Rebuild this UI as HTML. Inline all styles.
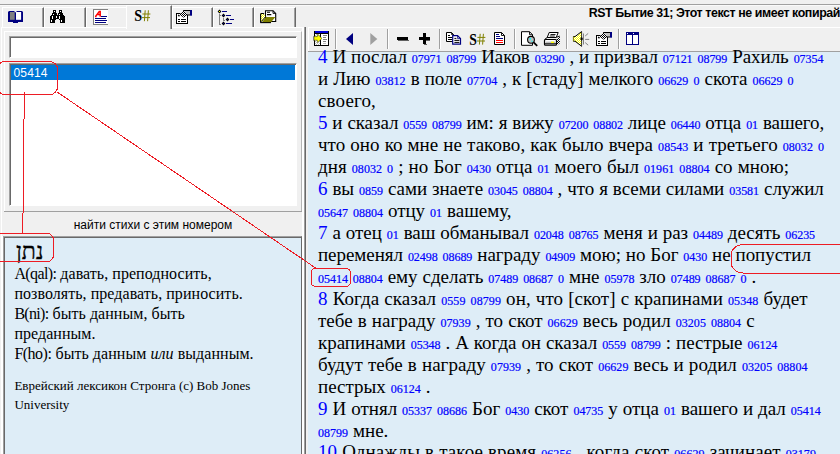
<!DOCTYPE html>
<html><head><meta charset="utf-8">
<style>
html,body{margin:0;padding:0;}
body{width:840px;height:454px;overflow:hidden;background:#f0f0f0;position:relative;font-family:"Liberation Sans",sans-serif;}
.abs{position:absolute;}
#topline{left:0;top:4px;width:840px;height:1px;background:#a0a0a0;}
#topline2{left:0;top:5px;width:840px;height:1px;background:#fafafa;}
#title{left:588.7px;top:5.8px;font-weight:bold;font-size:12.4px;white-space:nowrap;color:#000;letter-spacing:-0.42px;}
.tab{top:7px;height:20px;width:41px;border-right:1px solid #696969;box-shadow:inset -1px 0 0 #a0a0a0;border-top:1px solid #fff;border-left:1px solid #fff;box-sizing:border-box;}
#tabbody{left:1px;top:27px;width:303px;height:440px;border-top:1px solid #fff;border-left:1px solid #fff;border-right:2px solid #fff;box-sizing:border-box;}
#input{left:9px;top:36px;width:288px;height:22px;background:#fff;box-sizing:border-box;border:1px solid;border-color:#a0a0a0 #fff #fff #a0a0a0;box-shadow:inset 1px 1px 0 #696969;}
#list{left:9px;top:63px;width:288px;height:143px;background:#fff;box-sizing:border-box;border:1px solid;border-color:#a0a0a0 #fff #fff #a0a0a0;box-shadow:inset 1px 1px 0 #696969;}
#sel{left:1px;top:1px;width:284px;height:15px;background:#0078d7;color:#fff;font-size:12px;line-height:17px;padding-left:2.5px;letter-spacing:0.15px;box-sizing:border-box;}
#btn{left:4px;top:211px;width:298px;height:24px;box-sizing:border-box;border-top:1px solid #a0a0a0;font-size:12px;text-align:center;line-height:27px;color:#000;}
#lex{left:3px;top:236px;width:299px;height:230px;background:#deedf7;box-sizing:border-box;border:1px solid;border-color:#a0a0a0 #696969 #fff #a0a0a0;box-shadow:inset 1px 1px 0 #696969,-1px 0 0 #fff;font-family:"Liberation Serif",serif;color:#000;}
#heb{left:12px;top:2px;font-size:23px;line-height:26px;font-family:"Liberation Serif",serif;-webkit-text-stroke:0.35px #000;}
#lextext{left:10.4px;top:27px;font-size:16px;line-height:20px;letter-spacing:0.05px;width:290px;white-space:nowrap;}
#lexcopy{left:10.4px;top:139px;font-size:13px;line-height:19px;width:290px;white-space:nowrap;}
#split1{left:304px;top:27px;width:1px;height:440px;background:#a0a0a0;box-shadow:1px 0 0 #696969;}
#rpanel{left:308px;top:27px;width:540px;height:24px;border-top:1px solid #fff;border-left:1px solid #fff;box-sizing:border-box;}
#rtext{left:308px;top:51px;border-top:1px solid #a0a0a0;width:540px;height:410px;background:#deedf7;font-family:"Liberation Serif",serif;font-size:19px;line-height:22px;word-spacing:0.25px;color:#000;box-sizing:border-box;white-space:nowrap;}
#rtext .ln{position:absolute;left:10px;margin-top:-1px;white-space:nowrap;}
.v{color:#0000ff;}
.s{color:#0000ff;font-size:12px;-webkit-text-stroke:0.2px #0000ff;}
.sep{top:29px;width:1px;height:20px;background:#a0a0a0;box-shadow:1px 0 0 #fff;}
</style></head><body>
<div class="abs" id="topline"></div><div class="abs" id="topline2"></div>
<div class="abs" id="title">RST Бытие 31; Этот текст не имеет копирайт</div>

<div class="abs tab" style="left:2px;width:42px"></div>
<div class="abs tab" style="left:44px;width:42px"></div>
<div class="abs tab" style="left:86px;width:42px"></div>
<div class="abs tab" style="left:172px;width:41px"></div>
<div class="abs tab" style="left:213px;width:41px"></div>
<div class="abs tab" style="left:254px;width:42px"></div>
<div class="abs tab" style="left:126px;top:5px;height:24px;width:46px;background:#f0f0f0;z-index:2"></div>
<div class="abs" id="tabbody"></div>


<svg class="abs" id="icons" style="left:0;top:0;z-index:5" width="840" height="54" viewBox="0 0 840 54">
<defs>
<pattern id="chk" width="2" height="2" patternUnits="userSpaceOnUse"><rect width="2" height="2" fill="#fff"/><rect width="1" height="1" fill="#000"/><rect x="1" y="1" width="1" height="1" fill="#000"/></pattern>
<pattern id="ychk" width="2" height="2" patternUnits="userSpaceOnUse"><rect width="2" height="2" fill="#ffff00"/><rect width="1" height="1" fill="#fff"/><rect x="1" y="1" width="1" height="1" fill="#fff"/></pattern>
<pattern id="gchk" width="2" height="2" patternUnits="userSpaceOnUse"><rect width="2" height="2" fill="#c0c0c0"/><rect width="1" height="1" fill="#fff"/><rect x="1" y="1" width="1" height="1" fill="#fff"/></pattern>
</defs>
<!-- book -->
<path d="M8 12L9 11H14L15.5 12.6L17 11H22L23 12V22H18V23H13V22H8Z" fill="#000080"/>
<rect x="10" y="12" width="4.7" height="7.8" fill="#808080"/>
<rect x="16" y="12" width="5.1" height="7.8" fill="#fff"/>
<g shape-rendering="crispEdges">
<!-- binoculars -->
<g fill="#000"><rect x="53" y="10" width="3" height="3"/><rect x="59" y="10" width="3" height="3"/><rect x="52" y="13" width="5" height="2"/><rect x="58" y="13" width="5" height="2"/><rect x="51" y="15" width="13" height="1"/><rect x="50" y="16" width="15" height="3"/><rect x="50" y="19" width="5" height="4"/><rect x="60" y="19" width="5" height="4"/><rect x="55" y="19" width="1" height="1"/><rect x="59" y="19" width="1" height="1"/></g>
<g fill="#fff"><rect x="54" y="11" width="1" height="1"/><rect x="60" y="11" width="1" height="1"/><rect x="53" y="14" width="1" height="1"/><rect x="59" y="14" width="1" height="1"/><rect x="52" y="16" width="1" height="3"/><rect x="56" y="16" width="1" height="2"/><rect x="59" y="16" width="1" height="3"/><rect x="51" y="20" width="1" height="2"/><rect x="61" y="20" width="1" height="2"/></g>
<!-- text icon -->
<rect x="93" y="9" width="15" height="16" fill="#fff"/>
<rect x="93" y="9" width="15" height="1" fill="#808080"/><rect x="93" y="9" width="1" height="16" fill="#808080"/><rect x="93" y="24" width="15" height="1" fill="#808080"/>
<rect x="101" y="16" width="6" height="1" fill="#000080"/>
<rect x="95" y="18" width="11" height="1" fill="#000080"/>
<rect x="95" y="20" width="12" height="1" fill="#000080"/>
<rect x="95" y="22" width="11" height="1" fill="#000080"/>
</g>
<path d="M95.4 16.6L99.3 11.4H100.2L100.2 16.8M97 14.6H100.2M95 16.6H96.6" stroke="#ff0000" stroke-width="1.5" fill="none"/>
<!-- S# tab -->
<text transform="translate(134.2,21.1) scale(0.86,1)" font-family="Liberation Serif" font-weight="bold" font-size="16.5" fill="#000">S</text>
<path d="M145.2 10.3L144.4 21.2M148.4 10.3L147.6 21.2M142.4 14H150.4M142 17.6H150" stroke="#808000" stroke-width="1" fill="none"/>
<g transform="translate(0,0)">
<rect x="176.5" y="13.5" width="11" height="10" fill="#fff" stroke="#000" stroke-width="1" shape-rendering="crispEdges"/>
<path d="M178 19.5h2M181 19.5h5M178 21.5h2M181 21.5h5" stroke="#000" stroke-width="1" shape-rendering="crispEdges"/>
<path d="M183.3 10.5H190V15H186.5L184.3 17.7L179.3 15.2Z" fill="#c0c0c0"/>
<path d="M183.5 10.3L179 15.2L181 15.8L184.3 17.9L187.3 14.6Z" fill="url(#chk)"/>
<path d="M183.2 10.5H190M186.6 15H190" stroke="#000" stroke-width="1.1"/>
<path d="M178.2 14.8l1.2 1.6" stroke="#000" stroke-width="1.2"/>
<rect x="190" y="10" width="2" height="5.7" fill="#000080"/>
</g>
<!-- tree icon -->
<g shape-rendering="crispEdges">
<path d="M219.5 14v10h1M223.5 18v2h1" stroke="#808080" stroke-width="1" fill="none"/>
<rect x="219" y="15" width="2" height="1" fill="#808080"/>
<rect x="222" y="11" width="5" height="1" fill="#000080"/>
<rect x="226" y="15" width="5" height="1" fill="#000080"/>
<rect x="230" y="19" width="4" height="1" fill="#000080"/>
<rect x="226" y="23" width="6" height="1" fill="#000080"/>
</g>
<path d="M219.5 9.6l1.9 1.9-1.9 1.9-1.9-1.9z" fill="#000"/><rect x="219" y="11" width="1" height="1" fill="#ffff00"/>
<path d="M223.5 13.6l1.9 1.9-1.9 1.9-1.9-1.9zM227.5 17.6l1.9 1.9-1.9 1.9-1.9-1.9zM223.5 21.6l1.9 1.9-1.9 1.9-1.9-1.9z" fill="#000"/>
<rect x="223" y="15" width="1" height="1" fill="#000080"/><rect x="227" y="19" width="1" height="1" fill="#000080"/><rect x="223" y="23" width="1" height="1" fill="#000080"/>
<!-- folder icon -->
<path d="M265.5 10.7h7.5l2.7 2.7v8.1h-10.2z" fill="#fff" stroke="#000" stroke-width="1.1"/>
<path d="M273 10.7v2.7h2.7" fill="none" stroke="#000" stroke-width="0.9"/>
<path d="M267 12.3h3M267 14.6h4.3" stroke="#000" stroke-width="1.1"/>
<path d="M260.6 13.6h3l1.8 3l-4.8 5.8z" fill="url(#ychk)"/>
<path d="M260.6 22.6V14.2l.6-.7h2.2l.6.7" fill="none" stroke="#000" stroke-width="1.1"/>
<path d="M261.6 22.4l4.4-5.4h9.4l-4.6 5.4z" fill="#808000"/>
<path d="M260.2 22.6h10.8" stroke="#000" stroke-width="1.1"/>
<path d="M261.4 21.6l4.2-5" stroke="#000" stroke-width="0.9"/>

<!-- TOOLBAR -->
<g shape-rendering="crispEdges" transform="translate(0,-1)">
<!-- panel toggle -->
<rect x="314" y="32" width="15" height="15" fill="#000"/>
<rect x="315" y="32" width="13" height="2" fill="#0000d8"/>
<rect x="315" y="35" width="5" height="11" fill="url(#gchk)"/>
<rect x="321" y="35" width="7" height="11" fill="#fff"/>
<rect x="323" y="36" width="4" height="1" fill="#808080"/><rect x="323" y="38" width="3" height="1" fill="#808080"/><rect x="323" y="40" width="4" height="1" fill="#808080"/><rect x="323" y="42" width="3" height="1" fill="#808080"/><rect x="323" y="44" width="3" height="1" fill="#c0c0c0"/>
<rect x="313" y="37" width="1" height="5" fill="#a0a0a0"/>
</g>
<path d="M314 36.6h3.4v-2.4l4.6 4.2-4.6 4.2v-2.4H314z" fill="#ffff00" stroke="#303000" stroke-width="0.5"/>
<!-- arrows -->
<path d="M353 33v12l-7-6z" fill="#000080"/>
<path d="M370.3 33v12l7-6z" fill="#a0a0a0"/>
<!-- minus plus -->
<g shape-rendering="crispEdges">
<rect x="397" y="37" width="11" height="3" fill="#000"/><rect x="398" y="40" width="11" height="1" fill="#606060"/>
<rect x="419" y="37" width="11" height="3" fill="#000"/><rect x="423" y="33" width="3" height="11" fill="#000"/><rect x="426" y="40" width="4" height="1" fill="#606060"/><rect x="424" y="44" width="3" height="1" fill="#606060"/>
</g>
<!-- copy -->
<path d="M446.5 32.5h5l2 2v7h-7z" fill="#fff" stroke="#000" stroke-width="1"/>
<path d="M451.5 32.5v2h2" fill="none" stroke="#000" stroke-width="0.8"/>
<path d="M448 35.5h2M448 37.5h4M448 39.5h4" stroke="#000" stroke-width="1"/>
<path d="M452.7 35.6h4.8l3 3v5.6h-7.8z" fill="#fff" stroke="#000080" stroke-width="1.2"/>
<path d="M457.6 35.8v2.8h2.8" fill="none" stroke="#000080" stroke-width="0.8"/>
<path d="M454.4 38.4h2M454.4 40.4h5M454.4 42.4h5" stroke="#000" stroke-width="1"/>
<!-- S# toolbar -->
<text transform="translate(469.2,44.6) scale(0.86,1)" font-family="Liberation Serif" font-weight="bold" font-size="16" fill="#000">S</text>
<path d="M480.2 33.8L479.4 44.6M483.4 33.8L482.6 44.6M477.4 37.4H485.4M477 41H485" stroke="#808000" stroke-width="1" fill="none"/>
<!-- doc -->
<path d="M494.5 32.5h7l3 3v9h-10z" fill="#fff" stroke="#000" stroke-width="1"/>
<path d="M501.5 32.5v3h3" fill="none" stroke="#000" stroke-width="0.9"/>
<g shape-rendering="crispEdges">
<rect x="496" y="34" width="3" height="1" fill="#000080"/><rect x="496" y="36" width="4" height="1" fill="#000080"/><rect x="496" y="38" width="7" height="1" fill="#000080"/>
<rect x="496" y="40" width="7" height="1" fill="#ff0000"/><rect x="496" y="42" width="7" height="1" fill="#ff0000"/>
</g>
<!-- preview -->
<path d="M521.5 31.7h8l3 3v10.6h-11z" fill="#fff" stroke="#000" stroke-width="1"/>
<path d="M529.5 31.7v3h3" fill="none" stroke="#000" stroke-width="0.9"/>
<circle cx="531" cy="39.8" r="3.4" fill="#c0c0c0" stroke="#000" stroke-width="1.1"/>
<rect x="529.4" y="38" width="1.6" height="1.6" fill="#00ffff"/><rect x="531.4" y="40.6" width="1.2" height="1.2" fill="#00ffff"/>
<path d="M533.6 42.4l3.6 3.4" stroke="#000" stroke-width="1.8"/>
<!-- printer -->
<path d="M549.2 32.5h9l-2 5h-9z" fill="#fff" stroke="#000" stroke-width="1"/>
<path d="M550.5 34.5h5M549.8 36h5" stroke="#000" stroke-width="0.9"/>
<path d="M556.5 39.3l3.4-3v7l-3.4 2.4z" fill="url(#chk)"/>
<path d="M544.5 39.5l3-2.2M556.4 37.3l3.4-1.2" stroke="#000" stroke-width="1" fill="none"/>
<rect x="544.5" y="39.5" width="12" height="5.7" rx="1" fill="#fff" stroke="#000" stroke-width="1.2"/>
<rect x="545.5" y="41.6" width="10" height="1.4" fill="#c0c0c0"/><rect x="551" y="41.6" width="3" height="1.4" fill="#ffff00"/>
<path d="M545 43.7h11" stroke="#000" stroke-width="0.9"/>
<!-- speaker -->
<path d="M573.2 36.6h1.8l6.6-5v14.6l-6.6-5h-1.8z" fill="url(#ychk)"/>
<path d="M573.2 36.6h1.8l6.6-5M581.6 46.2l-6.6-5h-1.8" fill="none" stroke="#000" stroke-width="1"/>
<path d="M573.4 36.6v4.6" stroke="#808000" stroke-width="1"/>
<path d="M581.6 31.4v15" stroke="#000" stroke-width="0.8"/>
<ellipse cx="581.6" cy="38.8" rx="1.2" ry="1.6" fill="#000"/>
<path d="M583.5 33.5v11" stroke="#808080" stroke-width="1"/>
<path d="M585.2 36l3-2.6M585.2 39.4h4M585.2 42.6l3 2.6" stroke="#808080" stroke-width="1"/>
<g transform="translate(420,22)">
<rect x="176.5" y="13.5" width="11" height="10" fill="#fff" stroke="#000" stroke-width="1" shape-rendering="crispEdges"/>
<path d="M178 19.5h2M181 19.5h5M178 21.5h2M181 21.5h5" stroke="#000" stroke-width="1" shape-rendering="crispEdges"/>
<path d="M183.3 10.5H190V15H186.5L184.3 17.7L179.3 15.2Z" fill="#c0c0c0"/>
<path d="M183.5 10.3L179 15.2L181 15.8L184.3 17.9L187.3 14.6Z" fill="url(#chk)"/>
<path d="M183.2 10.5H190M186.6 15H190" stroke="#000" stroke-width="1.1"/>
<path d="M178.2 14.8l1.2 1.6" stroke="#000" stroke-width="1.2"/>
<rect x="190" y="10" width="2" height="5.7" fill="#000080"/>
</g>
<!-- columns -->
<g shape-rendering="crispEdges">
<rect x="626" y="32" width="13" height="13" fill="#000080"/>
<rect x="627" y="35" width="5" height="9" fill="#fff"/><rect x="633" y="35" width="5" height="9" fill="#fff"/>
<rect x="627" y="33" width="1" height="1" fill="#fff"/><rect x="633" y="33" width="1" height="1" fill="#fff"/>
</g>
</svg>
<div class="abs" id="inner" style="left:4px;top:31px;width:298px;height:180px;box-sizing:border-box;border:1px solid #fff;border-right-color:#b4b4b4;border-bottom:none"></div>
<div class="abs" id="input"></div>
<div class="abs" id="list"><div class="abs" id="sel">05414</div></div>
<div class="abs" id="btn">найти стихи с этим номером</div>
<div class="abs" id="lex">
 <div class="abs" id="heb">נתן</div>
 <div class="abs" id="lextext"><span style="letter-spacing:-0.62px">A(qal):</span> давать, преподносить,<br>позволять, предавать, приносить.<br><span style="letter-spacing:-0.7px">B(ni):</span> быть данным, быть<br>преданным.<br><span style="letter-spacing:-0.5px">F(ho):</span> быть данным <i>или</i> выданным.</div>
 <div class="abs" id="lexcopy">Еврейский лексикон Стронга (c) Bob Jones<br>University</div>
</div>
<div class="abs" id="split1"></div>
<div class="abs" id="rpanel"></div>
<div class="abs sep" style="left:335px"></div><div class="abs sep" style="left:387px"></div><div class="abs sep" style="left:439px"></div><div class="abs sep" style="left:514px"></div><div class="abs sep" style="left:566px"></div><div class="abs sep" style="left:618px"></div>
<div class="abs" id="rtext">
<div class="ln" style="top:-5px;letter-spacing:-0.054px"><span class="v">4</span> И послал <span class="s">07971</span> <span class="s">08799</span> Иаков <span class="s">03290</span> , и призвал <span class="s">07121</span> <span class="s">08799</span> Рахиль <span class="s">07354</span></div>
<div class="ln" style="top:17px;letter-spacing:0.017px">и Лию <span class="s">03812</span> в поле <span class="s">07704</span> , к [стаду] мелкого <span class="s">06629</span> <span class="s">0</span> скота <span class="s">06629</span> <span class="s">0</span></div>
<div class="ln" style="top:39px;letter-spacing:0.141px">своего,</div>
<div class="ln" style="top:61px;letter-spacing:-0.072px"><span class="v">5</span> и сказал <span class="s">0559</span> <span class="s">08799</span> им: я вижу <span class="s">07200</span> <span class="s">08802</span> лице <span class="s">06440</span> отца <span class="s">01</span> вашего,</div>
<div class="ln" style="top:83px;letter-spacing:0.044px">что оно ко мне не таково, как было вчера <span class="s">08543</span> и третьего <span class="s">08032</span> <span class="s">0</span></div>
<div class="ln" style="top:105px;letter-spacing:0.048px">дня <span class="s">08032</span> <span class="s">0</span> ; но Бог <span class="s">0430</span> отца <span class="s">01</span> моего был <span class="s">01961</span> <span class="s">08804</span> со мною;</div>
<div class="ln" style="top:127px;letter-spacing:-0.038px"><span class="v">6</span> вы <span class="s">0859</span> сами знаете <span class="s">03045</span> <span class="s">08804</span> , что я всеми силами <span class="s">03581</span> служил</div>
<div class="ln" style="top:149px;letter-spacing:-0.012px"><span class="s">05647</span> <span class="s">08804</span> отцу <span class="s">01</span> вашему,</div>
<div class="ln" style="top:171px;letter-spacing:-0.039px"><span class="v">7</span> а отец <span class="s">01</span> ваш обманывал <span class="s">02048</span> <span class="s">08765</span> меня и раз <span class="s">04489</span> десять <span class="s">06235</span></div>
<div class="ln" style="top:193px;letter-spacing:-0.051px">переменял <span class="s">02498</span> <span class="s">08689</span> награду <span class="s">04909</span> мою; но Бог <span class="s">0430</span> не попустил</div>
<div class="ln" style="top:215px;letter-spacing:-0.026px"><span class="s">05414</span> <span class="s">08804</span> ему сделать <span class="s">07489</span> <span class="s">08687</span> <span class="s">0</span> мне <span class="s">05978</span> зло <span class="s">07489</span> <span class="s">08687</span> <span class="s">0</span> .</div>
<div class="ln" style="top:237px;letter-spacing:0.076px"><span class="v">8</span> Когда сказал <span class="s">0559</span> <span class="s">08799</span> он, что [скот] с крапинами <span class="s">05348</span> будет</div>
<div class="ln" style="top:259px;letter-spacing:0.031px">тебе в награду <span class="s">07939</span> , то скот <span class="s">06629</span> весь родил <span class="s">03205</span> <span class="s">08804</span> с</div>
<div class="ln" style="top:281px;letter-spacing:-0.033px">крапинами <span class="s">05348</span> . А когда он сказал <span class="s">0559</span> <span class="s">08799</span> : пестрые <span class="s">06124</span></div>
<div class="ln" style="top:303px;letter-spacing:0.050px">будут тебе в награду <span class="s">07939</span> , то скот <span class="s">06629</span> весь и родил <span class="s">03205</span> <span class="s">08804</span></div>
<div class="ln" style="top:325px">пестрых <span class="s">06124</span> .</div>
<div class="ln" style="top:347px;letter-spacing:-0.008px"><span class="v">9</span> И отнял <span class="s">05337</span> <span class="s">08686</span> Бог <span class="s">0430</span> скот <span class="s">04735</span> у отца <span class="s">01</span> вашего и дал <span class="s">05414</span></div>
<div class="ln" style="top:369px"><span class="s">08799</span> мне.</div>
<div class="ln" style="top:390px;letter-spacing:0.073px"><span class="v">10</span> Однажды в такое время <span class="s">06256</span> , когда скот <span class="s">06629</span> зачинает <span class="s">03179</span></div>
</div>

<svg class="abs" style="left:0;top:0;z-index:10" width="840" height="454" viewBox="0 0 840 454" fill="none" stroke="#ed1c24" stroke-width="1" shape-rendering="crispEdges">
<rect x="-3" y="61.4" width="60.7" height="33.4" rx="8.5"/>
<line x1="24.3" y1="92" x2="22.8" y2="233.2"/>
<rect x="-8" y="233.2" width="61.6" height="28.6" rx="7"/>
<line x1="57.1" y1="92" x2="316.3" y2="268.5"/>
<rect x="311" y="268.5" width="39.5" height="17.8" rx="4.5"/>
<rect x="731" y="244.6" width="130" height="28.4" rx="12" ry="11"/>
</svg>
</body></html>
